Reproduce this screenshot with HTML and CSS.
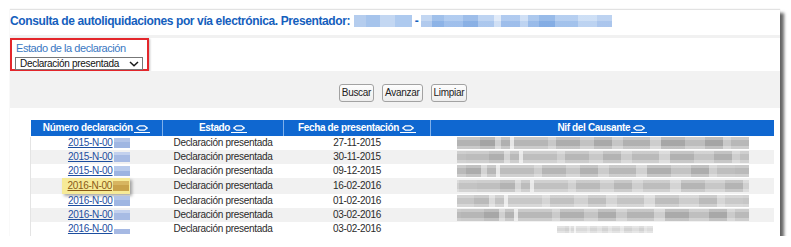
FILE: index.html
```html
<!DOCTYPE html>
<html lang="es">
<head>
<meta charset="utf-8">
<title>Consulta de autoliquidaciones</title>
<link rel="stylesheet" href="styles.css">
</head>
<body>
<div class="window">
  <h1 class="title">Consulta de autoliquidaciones por vía electrónica. Presentador: <span class="redact rb1"></span><span class="dash">-</span><span class="redact rb2"></span></h1>
  <div class="filter-area">
    <div class="filter-box">
      <label class="filter-label">Estado de la declaración</label>
      <div class="select"><span>Declaración presentada</span><svg class="chev" width="10" height="6" viewBox="0 0 10 6"><polyline points="1,1 5,4.8 9,1" fill="none" stroke="#1a1a1a" stroke-width="1.5"/></svg></div>
    </div>
  </div>
  <div class="actions">
    <button class="btn">Buscar</button>
    <button class="btn">Avanzar</button>
    <button class="btn">Limpiar</button>
  </div>
  <div class="results">
    <table class="grid">
      <colgroup><col class="c1"><col class="c2"><col class="c3"><col class="c4"></colgroup>
      <thead>
        <tr>
          <th>Número declaración<span class="sort"><svg width="12" height="6" viewBox="0 0 12 6"><polygon points="0.8,3 3.5,0.8 8.5,0.8 11.2,3 8.5,5.2 3.5,5.2" fill="none" stroke="#fff" stroke-width="1.3"/></svg></span></th>
          <th>Estado<span class="sort"><svg width="12" height="6" viewBox="0 0 12 6"><polygon points="0.8,3 3.5,0.8 8.5,0.8 11.2,3 8.5,5.2 3.5,5.2" fill="none" stroke="#fff" stroke-width="1.3"/></svg></span></th>
          <th>Fecha de presentación<span class="sort"><svg width="12" height="6" viewBox="0 0 12 6"><polygon points="0.8,3 3.5,0.8 8.5,0.8 11.2,3 8.5,5.2 3.5,5.2" fill="none" stroke="#fff" stroke-width="1.3"/></svg></span></th>
          <th>Nif del Causante<span class="sort"><svg width="12" height="6" viewBox="0 0 12 6"><polygon points="0.8,3 3.5,0.8 8.5,0.8 11.2,3 8.5,5.2 3.5,5.2" fill="none" stroke="#fff" stroke-width="1.3"/></svg></span></th>
        </tr>
      </thead>
      <tbody>
        <tr><td><span class="num"><a href="#">2015-N-00</a><span class="idblur b1"></span></span></td><td>Declaración presentada</td><td>27-11-2015</td><td><span class="nif n1"></span></td></tr>
        <tr><td><span class="num"><a href="#">2015-N-00</a><span class="idblur b2"></span></span></td><td>Declaración presentada</td><td>30-11-2015</td><td><span class="nif n2"></span></td></tr>
        <tr><td><span class="num"><a href="#">2015-N-00</a><span class="idblur b3"></span></span></td><td>Declaración presentada</td><td>09-12-2015</td><td><span class="nif n3"></span></td></tr>
        <tr><td><span class="num hl"><a href="#">2016-N-00</a><span class="idblur bh"></span></span></td><td>Declaración presentada</td><td>16-02-2016</td><td><span class="nif n4"></span></td></tr>
        <tr><td><span class="num"><a href="#">2016-N-00</a><span class="idblur b1"></span></span></td><td>Declaración presentada</td><td>01-02-2016</td><td><span class="nif n5"></span></td></tr>
        <tr><td><span class="num"><a href="#">2016-N-00</a><span class="idblur b2"></span></span></td><td>Declaración presentada</td><td>03-02-2016</td><td><span class="nif n6"></span></td></tr>
        <tr><td><span class="num"><a href="#">2016-N-00</a><span class="idblur b4"></span></span></td><td>Declaración presentada</td><td>03-02-2016</td><td><span class="nif n7"></span></td></tr>
      </tbody>
    </table>
  </div>
</div>
</body>
</html>
```
FILE: styles.css
```css
* { box-sizing: border-box; }
html, body { margin: 0; padding: 0; background: #fff; }
body {
  font-family: "Liberation Sans", Arial, sans-serif;
  font-size: 10px;
  letter-spacing: -0.3px;
  color: #2a2a2a;
  padding: 9px 0 0 10px;
}
.window {
  width: 770px;
  height: 227px;
  background: #fff;
  border-top: 1px solid #e2e2e2;
  box-shadow: 4px 4px 3px rgba(0,0,0,0.6), 0 0 1px rgba(0,0,0,0.15);
  overflow: hidden;
}
.title {
  margin: 0;
  height: 28px;
  padding: 4px 0 0 0;
  font-size: 12px;
  font-weight: bold;
  letter-spacing: -0.38px;
  line-height: 14px;
  color: #1560bd;
  border-bottom: 3px solid #f1f1f1;
  white-space: nowrap;
}
.redact {
  display: inline-block;
  height: 12px;
  vertical-align: -2px;
}
.rb1 {
  width: 58px;
  margin-left: 1px;
  background: linear-gradient(90deg, #b5cdee 0 20%, #a6c4ec 20% 45%, #c3d7f2 45% 70%, #aecaef 70% 100%);
}
.dash { display: inline-block; width: 9px; text-align: center; color: #1560bd; }
.rb2 {
  width: 191px;
  background:
    linear-gradient(180deg, rgba(255,255,255,0.15) 0 50%, rgba(120,160,220,0.12) 50% 100%),
    linear-gradient(90deg, #b9d0f0 0 6%, #90b6e8 6% 12%, #a5c4ee 12% 22%, #8db3e6 22% 30%, #b3cdf0 30% 38%, #dce8f8 38% 42%, #a3c2ed 42% 52%, #c8dbf4 52% 56%, #9ebfeb 56% 62%, #86afe5 62% 70%, #a9c7ee 70% 82%, #c6daf4 82% 92%, #b2cbef 92% 100%);
}
.filter-area {
  height: 33px;
  background: #fff;
}
.filter-box {
  width: 139px;
  height: 33px;
  border: 2px solid #e3262b;
  box-shadow: 1px 1px 2px rgba(0,0,0,0.25);
  padding: 2px 0 0 3px;
}
.filter-label {
  display: block;
  font-size: 11px;
  letter-spacing: -0.45px;
  line-height: 12px;
  color: #3a78c2;
  padding-left: 1px;
}
.select {
  margin-top: 3px;
  width: 128px;
  height: 13px;
  border: 1px solid #777;
  background: #fff;
  display: flex;
  align-items: center;
  justify-content: space-between;
  padding: 0 3px 0 4px;
  color: #111;
  line-height: 11px;
}
.actions {
  height: 37px;
  background: #f2f2f2;
  display: flex;
  justify-content: center;
  align-items: flex-start;
  gap: 8px;
  padding: 13px 0 0 16px;
}
.btn {
  font-family: inherit;
  font-size: 10px;
  letter-spacing: -0.3px;
  color: #222;
  height: 18px;
  padding: 0 2px;
  border: 1px solid #a2a2a2;
  border-radius: 3px;
  background: linear-gradient(#fdfdfd, #ededed);
  line-height: 16px;
}
.results {
  padding: 12px 0 0 20px;
}
.grid {
  border-collapse: collapse;
  table-layout: fixed;
  width: 743px;
}
.c1 { width: 132px; }
.c2 { width: 121px; }
.c3 { width: 147px; }
.c4 { width: 343px; }
.grid th {
  height: 16px;
  padding: 0 0 1px 0;
  background: #0f67d0;
  color: #fff;
  font-weight: bold;
  font-size: 10px;
  letter-spacing: -0.35px;
  text-align: center;
  line-height: 13px;
  border-left: 1px solid #7fb0ea;
  border-bottom: 1px solid #fff;
}
.grid th:first-child { border-left: none; }
.sort {
  display: inline-block;
  margin-left: 1px;
  padding: 0 2px 1px 2px;
  border-bottom: 1px solid #fff;
  line-height: 0;
  vertical-align: -2px;
}
.sort svg { display: block; }
.grid td {
  height: 14px;
  padding: 0;
  text-align: center;
  line-height: 12px;
  white-space: nowrap;
  color: #2a2a2a;
}
.grid td:first-child { border-left: 1px solid #e4e4e4; }
.grid tbody tr:nth-child(even) td { background: #f1f1f1; }
.num {
  display: inline-flex;
  align-items: center;
  margin-left: 4px;
}
.num a {
  color: #1c4e9f;
  text-decoration: underline;
}
.idblur {
  display: inline-block;
  width: 16px;
  height: 10px;
  margin-left: 1px;
}
.b1 { background: linear-gradient(180deg, #b2c4e8 0 40%, #9fb6e2 40% 100%); }
.b2 { background: linear-gradient(180deg, #c3d1ee 0 30%, #a7bbe4 30% 100%); }
.b3 { background: linear-gradient(180deg, #b9cbec 0 50%, #9db4e1 50% 100%); }
.b4 { height: 5px; margin-top: 4px; background: #a6b9e3; }
.num.hl {
  background: #f6ea98;
  padding: 2px 1px 2px 5px;
  margin-left: -1px;
  box-shadow: 2px 2px 3px rgba(0,0,0,0.35);
}
.num.hl a { color: #8a5a16; }
.bh { background: linear-gradient(180deg, #d7b560 0 40%, #c9a24a 40% 100%); }
.nif {
  display: block;
  width: 292px;
  height: 12px;
  margin-left: 26px;
  background:
    linear-gradient(180deg, rgba(255,255,255,0.25) 0 25%, rgba(0,0,0,0) 25% 75%, rgba(255,255,255,0.3) 75% 100%),
    linear-gradient(90deg, #b3b3b3 0 8%, #a4a4a4 8% 13%, #cfcfcf 13% 15%, #b0b0b0 15% 18%, #e6e6e6 18% 19.5%, #b6b6b6 19.5% 31%, #c8c8c8 31% 34%, #adadad 34% 42%, #c2c2c2 42% 47%, #a9a9a9 47% 53%, #c6c6c6 53% 57%, #b1b1b1 57% 66%, #cdcdcd 66% 70%, #a7a7a7 70% 78%, #bdbdbd 78% 85%, #a5a5a5 85% 91%, #c9c9c9 91% 94%, #b8b8b8 94% 100%);
}
.n2 { background-position: 0 0, 9px 0; opacity: 0.85; }
.n3 { background-position: 0 0, -14px 0; opacity: 0.9; }
.n4 { background-position: 0 0, 20px 0; opacity: 0.8; }
.n5 { background-position: 0 0, -6px 0; opacity: 0.75; }
.n6 { background-position: 0 0, 4px 0; opacity: 0.95; }
.n7 {
  width: 96px;
  margin-left: 126px;
  height: 7px;
  opacity: 0.5;
}
```
